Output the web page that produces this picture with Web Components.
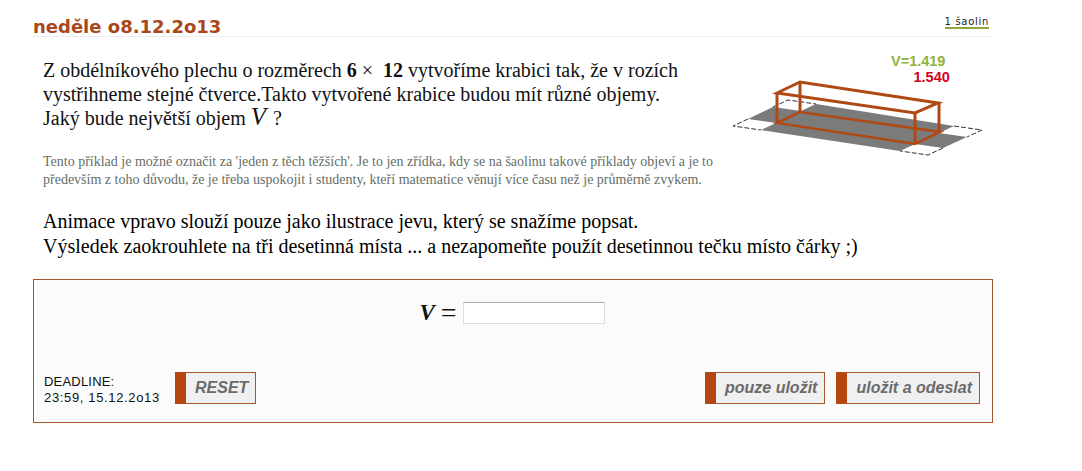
<!DOCTYPE html>
<html>
<head>
<meta charset="utf-8">
<title>saolin</title>
<style>
  html, body { margin: 0; background: #fff; }
  body { font-family: "Liberation Serif", serif; color: #111; }
</style>
</head>
<body>
<task-page>
  <day-header slot="header" date="neděle o8.12.2o13" award="1 šaolin"></day-header>
  <task-intro slot="intro">
    Z obdélníkového plechu o rozměrech <b>6</b> × <b class="wide">12</b> vytvoříme krabici tak, že v rozích<br>
    vystřihneme stejné čtverce.Takto vytvořené krabice budou mít různé objemy.<br>
    Jaký bude největší objem <i class="v">V</i> ?
    <span slot="note">Tento příklad je možné označit za 'jeden z těch těžších'. Je to jen zřídka, kdy se na šaolinu takové příklady objeví a je to<br>především z toho důvodu, že je třeba uspokojit i studenty, kteří matematice věnují více času než je průměrně zvykem.</span>
  </task-intro>
  <task-assignment slot="assignment">
    Animace vpravo slouží pouze jako ilustrace jevu, který se snažíme popsat.<br>
    Výsledek zaokrouhlete na tři desetinná místa ... a nezapomeňte použít desetinnou tečku místo čárky ;)
  </task-assignment>
  <answer-box slot="answer" deadline="23:59, 15.12.2o13">
    <action-button slot="left">RESET</action-button>
    <action-button slot="right">pouze uložit</action-button>
    <action-button slot="right">uložit a odeslat</action-button>
  </answer-box>
</task-page>

<script>
class TaskPage extends HTMLElement {
  constructor() {
    super();
    this.attachShadow({ mode: 'open' });
    this.shadowRoot.innerHTML = `
      <style>
        :host { display: block; width: 960px; margin-left: 33px; padding-top: 15px; }
      </style>
      <slot name="header"></slot>
      <slot name="intro"></slot>
      <slot name="assignment"></slot>
      <slot name="answer"></slot>`;
  }
}

class DayHeader extends HTMLElement {
  constructor() {
    super();
    this.attachShadow({ mode: 'open' });
  }

  connectedCallback() {
    this.shadowRoot.innerHTML = `
      <style>
        :host {
          display: flex;
          justify-content: space-between;
          align-items: flex-end;
          width: 958px;
          height: 21px;
          border-bottom: 1px solid #eeeeee;
        }
        h1 {
          margin: 0 0 -2px;
          font: bold 18px/22px "DejaVu Sans", Verdana, sans-serif;
          color: #a9471c;
        }
        .award {
          font: 10px/11px "DejaVu Sans", Verdana, sans-serif;
          letter-spacing: 0.7px;
          color: #222;
          border-bottom: 2px solid #8fa83c;
          margin: 0 2px 7px 0;
        }
      </style>
      <h1>${this.getAttribute('date')}</h1>
      <span class="award">${this.getAttribute('award')}</span>`;
  }
}

class TaskIntro extends HTMLElement {
  constructor() {
    super();
    this.attachShadow({ mode: 'open' });
    this.shadowRoot.innerHTML = `
      <style>
        :host {
          display: flex;
          justify-content: space-between;
          padding: 21px 6px 0 10px;
          font-size: 20px;
          line-height: 24px;
        }
        ::slotted(span) {
          display: block;
          margin-top: 23px;
          font-size: 14px;
          line-height: 18px;
          color: #666e66;
        }
        ::slotted(b.wide) { margin-left: 5px; }
        ::slotted(i.v) { font-size: 25px; line-height: 0; margin-right: 2px; }
        .text { width: 687px; white-space: nowrap; }
      </style>
      <div class="text"><slot></slot><slot name="note"></slot></div>
      <box-figure></box-figure>`;
  }
}

class BoxFigure extends HTMLElement {
  constructor() {
    super();
    this.attachShadow({ mode: 'open' });
    // coordinates are page px minus the origin of the svg (730, 50)
    this.shadowRoot.innerHTML = `
      <style>
        :host { display: block; flex: none; width: 257px; height: 110px; margin-top: -8px; }
        svg { display: block; }
        text { font: bold 14.5px "Liberation Sans", Arial, sans-serif; }
      </style>
      <svg width="257" height="110" viewBox="0 0 257 110">
        <polygon fill="#7b7b7b" points="18,69 43,57 71,61 86,54 224,76 209,83 237,87 213,98 185,94 170,101 31,80 46,73"/>
        <g fill="none" stroke="#333" stroke-width="1" stroke-dasharray="5 2">
          <path d="M18,69 L3,76 L31,80"/>
          <path d="M43,57 L58,50 L86,54"/>
          <path d="M224,76 L252,80 L237,87"/>
          <path d="M213,98 L198,105 L170,101"/>
        </g>
        <g fill="none" stroke="#b04a14">
          <path stroke-width="2.5" d="M47,73 L70,62 L210,82 L185,94 Z"/>
          <path stroke-width="3" d="M47,43 L70,32 L208,53 L185,63 Z"/>
          <path stroke-width="3" d="M47,43 V73 M70,32 V62 M209,53 V82 M185,63 V94"/>
        </g>
        <text x="161" y="16" fill="#8fb339">V=1.419</text>
        <text x="183.500" y="32" fill="#d5001c">1.540</text>
      </svg>`;
  }
}

class TaskAssignment extends HTMLElement {
  constructor() {
    super();
    this.attachShadow({ mode: 'open' });
    this.shadowRoot.innerHTML = `
      <style>
        :host {
          display: block;
          margin-top: 20px;
          padding-left: 10px;
          font-size: 20px;
          line-height: 25px;
          color: #000;
        }
      </style>
      <slot></slot>`;
  }
}

class AnswerBox extends HTMLElement {
  constructor() {
    super();
    this.attachShadow({ mode: 'open' });
  }

  connectedCallback() {
    this.shadowRoot.innerHTML = `
      <style>
        :host {
          display: block;
          box-sizing: border-box;
          width: 960px;
          height: 144px;
          margin-top: 20px;
          border: 1px solid #a9562f;
          background: #fbfbfb;
          padding: 21px 12px 18px 10px;
        }
        .formula {
          display: flex;
          justify-content: center;
          align-items: center;
          height: 24px;
          font-size: 25px;
        }
        .formula i { font-weight: bold; font-size: 23px; }
        .formula span { margin: 0 6px 0 6px; font-size: 28px; font-weight: 400; }
        input {
          box-sizing: border-box;
          width: 142px;
          height: 22px;
          margin: 0;
          background: #fff;
          border: 1px solid #dedede;
          border-top-color: #aaa;
        }
        .bottom {
          display: flex;
          align-items: flex-end;
          margin-top: 47px;
        }
        .deadline {
          width: 131px;
          margin-bottom: -2px;
          font: 13px/16px "Liberation Sans", Arial, sans-serif;
          letter-spacing: 0.2px;
          color: #111;
        }
        .deadline b { font-weight: 400; letter-spacing: 0.65px; }
        .left { flex: 1; }
        .right { display: flex; gap: 11px; }
      </style>
      <div class="formula"><i>V</i><span>=</span><input type="text"></div>
      <div class="bottom">
        <div class="deadline">DEADLINE:<br><b>${this.getAttribute('deadline')}</b></div>
        <div class="left"><slot name="left"></slot></div>
        <div class="right"><slot name="right"></slot></div>
      </div>`;
  }
}

class ActionButton extends HTMLElement {
  constructor() {
    super();
    this.attachShadow({ mode: 'open' });
    this.shadowRoot.innerHTML = `
      <style>
        :host {
          display: inline-block;
          box-sizing: border-box;
          height: 32px;
          padding: 0 7px 0 9px;
          border: 1px solid #a9562f;
          border-left: 11px solid #b5460f;
          background: #f0f0f0;
          font: italic bold 16px/29px "Liberation Sans", Arial, sans-serif;
          color: #6b6b6b;
          cursor: pointer;
        }
      </style>
      <slot></slot>`;
  }
}

customElements.define('task-page', TaskPage);
customElements.define('day-header', DayHeader);
customElements.define('task-intro', TaskIntro);
customElements.define('box-figure', BoxFigure);
customElements.define('task-assignment', TaskAssignment);
customElements.define('answer-box', AnswerBox);
customElements.define('action-button', ActionButton);
</script>
</body>
</html>
